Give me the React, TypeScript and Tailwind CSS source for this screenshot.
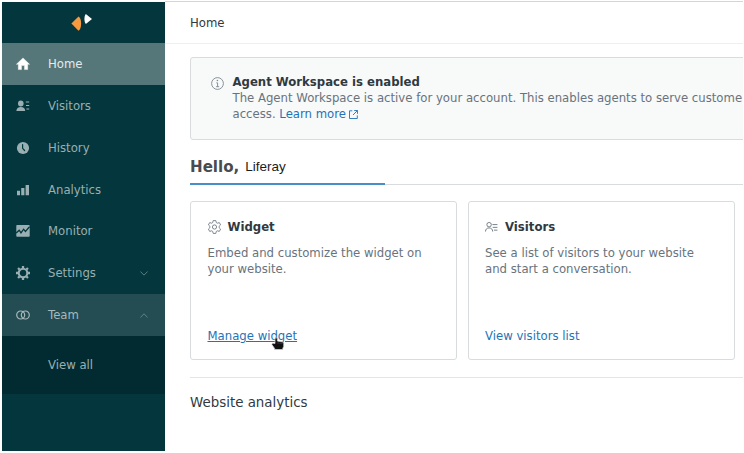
import React from "react";

type IconProps = { className?: string };

const HomeIcon = () => (
  <svg width="14" height="14" viewBox="0 0 14 14" fill="currentColor">
    <path d="M7 .9 L13.6 7.3 H11.7 V12.6 H8.5 V8.6 H5.5 V12.6 H2.3 V7.3 H.4 Z" stroke="currentColor" strokeWidth=".4" strokeLinejoin="round" />
  </svg>
);

const VisitorsIcon = () => (
  <svg width="14" height="14" viewBox="0 0 14 14" fill="currentColor">
    <ellipse cx="4.8" cy="4.4" rx="2.8" ry="3" />
    <path d="M.4 12.1 C.4 9.7 2.2 8.1 4.8 8.1 S9.2 9.7 9.2 12.1 Z" />
    <path d="M9.8 3h3.4M10 6.5h3.2M10.4 10h2.8" stroke="currentColor" strokeWidth="1.2" />
  </svg>
);

const HistoryIcon = () => (
  <svg width="14" height="14" viewBox="0 0 14 14">
    <circle cx="7" cy="7" r="6.1" fill="currentColor" />
    <path d="M6.6 3.6V7.3L8.6 9.5" fill="none" stroke="#03363d" strokeWidth="1.2" strokeLinecap="round" />
  </svg>
);

const AnalyticsIcon = () => (
  <svg width="14" height="14" viewBox="0 0 14 14" fill="currentColor">
    <path d="M1 7.8h3v4.4H1zM5.2 5h3.2v7.2H5.2zM9.6 2h3.4v10.2H9.6z" />
  </svg>
);

const MonitorIcon = () => (
  <svg width="14" height="14" viewBox="0 0 14 14">
    <rect x=".3" y="1" width="13.4" height="11.8" rx=".8" fill="currentColor" />
    <path d="M.2 8.9 L3.2 6.2 L5 8.8 L7.6 5.2 L9.4 7.4 L13.6 2.6" fill="none" stroke="#03363d" strokeWidth="1.3" />
  </svg>
);

const SettingsIcon = () => (
  <svg width="14" height="14" viewBox="0 0 14 14" fill="none" stroke="currentColor">
    <circle cx="7" cy="7" r="4.3" strokeWidth="2.1" />
    <path d="M7 0v2M7 12v2M0 7h2M12 7h2M2.05 2.05l1.4 1.4M10.55 10.55l1.4 1.4M2.05 11.95l1.4-1.4M10.55 3.45l1.4-1.4" strokeWidth="2.3" />
  </svg>
);

const TeamIcon = () => (
  <svg width="14" height="14" viewBox="0 0 14 14" fill="none" stroke="currentColor" strokeWidth="1.2">
    <circle cx="4.7" cy="7" r="4" />
    <circle cx="9.3" cy="7" r="4" />
  </svg>
);

const Chevron = ({ className }: IconProps) => (
  <svg className={className} width="8" height="5" viewBox="0 0 8 5" fill="none" stroke="currentColor" strokeWidth=".9">
    <path d="M.4 .5 L4 4.2 L7.6 .5" />
  </svg>
);

const InfoIcon = () => (
  <svg width="13" height="13" viewBox="0 0 13 13" fill="none" stroke="#7d868e" strokeWidth=".9">
    <circle cx="6.5" cy="6.5" r="5.9" />
    <path d="M5.3 5.8h1.3v4M5.1 9.7h3" />
    <circle cx="6.4" cy="3.5" r=".8" fill="#7d868e" stroke="none" />
  </svg>
);

const ExternalIcon = () => (
  <svg width="9" height="9" viewBox="0 0 9 9" fill="none" stroke="#1f73b7" strokeWidth=".9">
    <path d="M3.3 .8H.5v7.7h7.8V5.4M5.2 .5h3.3v3.3M8.4 .6L4 5" />
  </svg>
);

const GearIcon = () => (
  <svg width="13" height="14" viewBox="0 0 13 14" fill="none" stroke="#68737d" strokeWidth=".85" strokeLinejoin="round">
    <path d="M5.2 .6h2.6l.5 2 1 .6 2-.6 1.3 2.3-1.5 1.4v1.4l1.5 1.4-1.3 2.3-2-.6-1 .6-.5 2H5.2l-.5-2-1-.6-2 .6L.4 9.1l1.5-1.4V6.3L.4 4.9l1.3-2.3 2 .6 1-.6z" />
    <circle cx="6.5" cy="7" r="2.1" />
  </svg>
);

const VisitorsOutlineIcon = () => (
  <svg width="13" height="12" viewBox="0 0 14 12" fill="none" stroke="#68737d" strokeWidth=".95">
    <circle cx="4.4" cy="3.5" r="2.4" />
    <path d="M.5 10.9C.6 8.4 2 7 4.4 7s3.8 1.4 3.9 3.9M8 3.4h5.4M8.3 6.4h5.1M9.6 9.4h3.8" />
  </svg>
);

const HandCursor = () => (
  <svg width="14" height="14" viewBox="0 0 14 14" className="absolute left-[63px] top-[9px]">
    <path d="M5.2 .8c.8 0 1.2.5 1.2 1.3v2l5 .8c.9.2 1.3.7 1.3 1.5v3l-.9 1.9v1.2H3.6v-1.1L1 7.8C.6 7 1.2 6.2 2.2 6.3l1.8.2V2.1c0-.8.4-1.3 1.2-1.3z" fill="#111" stroke="#d8d8d8" strokeWidth=".7" />
    <path d="M7.1 5.4v1.3M9.1 5.7v1.2M11 6v1" stroke="#999" strokeWidth=".4" />
  </svg>
);

const navItems = [
  { label: "Home", Icon: HomeIcon, style: "bg-[#567779] text-white", text: "text-[#e4ebeb]" },
  { label: "Visitors", Icon: VisitorsIcon, style: "text-[#9aafb1]", text: "" },
  { label: "History", Icon: HistoryIcon, style: "text-[#9aafb1]", text: "" },
  { label: "Analytics", Icon: AnalyticsIcon, style: "text-[#9aafb1]", text: "" },
  { label: "Monitor", Icon: MonitorIcon, style: "text-[#9aafb1]", text: "" },
  { label: "Settings", Icon: SettingsIcon, style: "text-[#9aafb1]", text: "", chevron: "" },
  { label: "Team", Icon: TeamIcon, style: "bg-[#234d53] text-[#a7b8ba]", text: "", chevron: "rotate-180" },
];

function Sidebar() {
  return (
    <aside className="ml-[2px] mt-[2px] flex h-[449px] w-[163px] shrink-0 flex-col bg-[#03363d]">
      <div className="flex h-[41.4px] shrink-0 justify-center pr-[3px]">
        <svg className="mt-[11px]" width="22" height="19" viewBox="0 0 22 19">
          <path d="M.4 10.4L7.5 3.4q2.6 1.3 2.6 7t-2.6 7.3z" fill="#f79a3e" />
          <path d="M14.8 1.1q-1.4 1.4-1.4 4.8t1.4 5.2L21 6.1z" fill="white" />
        </svg>
      </div>
      {navItems.map(({ label, Icon, style, text, chevron }) => (
        <div key={label} className={`flex h-[41.8px] shrink-0 items-center pl-[14px] pr-[17px] ${style}`}>
          <Icon />
          <span className={`ml-[18px] flex-1 ${text}`}>{label}</span>
          {chevron !== undefined && <Chevron className={`text-[#64888c] ${chevron}`} />}
        </div>
      ))}
      <div className="flex h-[58px] shrink-0 items-center bg-[#022b31] pl-[46px] text-[#9aafb1]">View all</div>
    </aside>
  );
}

type CardProps = {
  title: string;
  icon: React.ReactNode;
  lines: string[];
  link: string;
  active?: boolean;
};

function Card({ title, icon, lines, link, active }: CardProps) {
  return (
    <section className="flex h-[159px] w-[267px] shrink-0 flex-col rounded-[3px] border border-[#d8dcde] px-[16.5px] pt-[17px]">
      <h2 className="flex h-4 items-center gap-[7px] font-bold text-[#2f3941]">
        {icon}
        {title}
      </h2>
      <p className="mt-[10px] whitespace-nowrap text-[#68737d]">
        {lines[0]}
        <br />
        {lines[1]}
      </p>
      <a className={`relative mt-[51px] self-start whitespace-nowrap text-[#1f73b7] ${active ? "underline" : ""}`}>
        {link}
        {active && <HandCursor />}
      </a>
    </section>
  );
}

export default function App() {
  return (
    <div className="flex h-[453px] w-[744px] overflow-hidden bg-white font-['DejaVu_Sans',sans-serif] text-[11.7px] leading-[16px]">
      <Sidebar />
      <main className="mt-px h-[450px] w-[578px] overflow-hidden border-t border-[#d3d6d8]">
        <header className="flex h-[42px] items-center border-b border-[#edf0f1] pl-[25px] text-[#2f3941]">Home</header>
        <div className="pl-[25px] pt-[13px]">
          <div className="flex h-[82.5px] w-[700px] rounded-[3px] border border-[#d8dcde] bg-[#f8f9f9] pl-[20px] pt-[16px]">
            <div className="pt-[3px]">
              <InfoIcon />
            </div>
            <div className="ml-[8.5px] whitespace-nowrap text-[#68737d]">
              <div className="font-bold text-[#2f3941]">Agent Workspace is enabled</div>
              <div>The Agent Workspace is active for your account. This enables agents to serve custome</div>
              <div className="flex items-center">
                access.&nbsp;
                <a className="flex items-center gap-[3px] text-[#1f73b7]">
                  Learn more
                  <ExternalIcon />
                </a>
              </div>
            </div>
          </div>
          <div className="flex h-[45.5px] items-start border-b border-[#d8dcde] pt-[17.5px]">
            <h1 className="flex h-[28px] w-[195px] items-start whitespace-nowrap border-b-2 border-[#488fc9] text-[15.1px] font-bold leading-[20px] text-[#494c4f]">
              Hello,
              <span className="ml-[6px] font-['Liberation_Sans',sans-serif] text-[13.5px] font-normal leading-[19px] text-[#1c1c1c]">Liferay</span>
            </h1>
          </div>
          <div className="mt-[16px] flex gap-[10.5px]">
            <Card title="Widget" icon={<GearIcon />} lines={["Embed and customize the widget on", "your website."]} link="Manage widget" active />
            <Card title="Visitors" icon={<VisitorsOutlineIcon />} lines={["See a list of visitors to your website", "and start a conversation."]} link="View visitors list" />
          </div>
          <h2 className="mt-[17px] border-t border-[#e3e6e7] pt-[15px] text-[13.4px] leading-[20px] text-[#2f3941]">Website analytics</h2>
        </div>
      </main>
    </div>
  );
}
